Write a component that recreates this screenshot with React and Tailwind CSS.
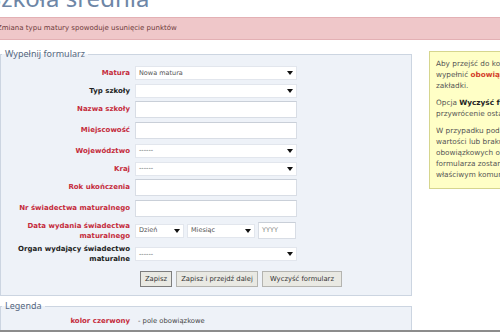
import React from 'react';

const Arrow = () => (
  <svg width="6" height="4" viewBox="0 0 6 4" className="shrink-0">
    <path d="M0 0 L6 0 L3 4 Z" fill="#111" />
  </svg>
);

const Select = ({ value = '', className = 'w-[162px]' }) => (
  <div className={`${className} h-[14px] bg-white border border-[#e2e6ed] flex items-center justify-between pl-[3px] pr-[3px]`}>
    <span className="text-[6.5px] text-[#555] leading-none">{value}</span>
    <Arrow />
  </div>
);

const Input = ({ placeholder = '', className = 'w-[162px]' }) => (
  <div className={`${className} h-[17px] bg-white border border-[#d8dde5] border-t-[#c9cfd8] flex items-center pl-[3px]`}>
    <span className="text-[6.5px] text-[#888] leading-none">{placeholder}</span>
  </div>
);

const Row = ({ label, required = true, h, children }) => (
  <div className={`flex items-center ${h}`}>
    <div className={`w-[129px] shrink-0 text-right font-bold text-[7px] leading-[10px] ${required ? 'text-[#c52c3c]' : 'text-[#222]'}`}>
      {label}
    </div>
    <div className="ml-[5px] flex items-center">{children}</div>
  </div>
);

const App = () => {
  return (
    <div className="w-[500px] h-[332px] overflow-hidden bg-white border-b-2 border-[#8c8c8c] font-['DejaVu_Sans',sans-serif]">
      {/* Page title, mostly scrolled off */}
      <div className="h-[17px] overflow-hidden">
        <div className="-mt-[14px] -ml-[12px] text-[24px] leading-[24px] text-[#6d86a6] font-['Noto_Sans',sans-serif]">Szkoła średnia</div>
      </div>

      {/* Warning bar */}
      <div className="h-[23px] bg-[#efc7c9] border-t border-b border-[#e3b0b4] flex items-center -ml-[3px]">
        <span className="text-[7px] text-[#6e3a3a] whitespace-nowrap">Zmiana typu matury spowoduje usunięcie punktów</span>
      </div>

      <div className="flex items-start">
        <div className="w-[412px] shrink-0">
          <fieldset className="mt-[8px] bg-[#eef2f8] border border-[#ccd5e1] pb-[3px]">
            <legend className="ml-[1px] px-[3px] text-[9px] leading-[12px] text-[#56687f] font-['Noto_Sans',sans-serif]">Wypełnij formularz</legend>
            <div className="pt-[4px]">
              <Row label="Matura" h="h-[18px]"><Select value="Nowa matura" /></Row>
              <Row label="Typ szkoły" required={false} h="h-[17px]"><Select /></Row>
              <Row label="Nazwa szkoły" h="h-[20px]"><Input /></Row>
              <Row label="Miejscowość" h="h-[22px]"><Input /></Row>
              <Row label="Województwo" h="h-[19px]"><Select value="------" /></Row>
              <Row label="Kraj" h="h-[17px]"><Select value="------" /></Row>
              <Row label="Rok ukończenia" h="h-[20px]"><Input /></Row>
              <Row label="Nr świadectwa maturalnego" h="h-[22px]"><Input /></Row>
              <Row label={<>Data wydania świadectwa<br />maturalnego</>} h="h-[23px]">
                <div className="flex items-center gap-[3px]">
                  <Select value="Dzień" className="w-[49px]" />
                  <Select value="Miesiąc" className="w-[68px]" />
                  <Input placeholder="YYYY" className="w-[38px]" />
                </div>
              </Row>
              <Row label={<>Organ wydający świadectwo<br />maturalne</>} required={false} h="h-[24px]">
                <Select value="------" />
              </Row>
              <div className="h-[26px] flex items-center pl-[139px] gap-[4px]">
                <button className="h-[16px] w-[32px] bg-[#e9e9e3] border border-[#7d7d7d] text-[6.8px] text-[#333]">Zapisz</button>
                <button className="h-[16px] w-[82px] bg-[#e9e9e3] border border-[#b4b4b0] text-[6.8px] text-[#333]">Zapisz i przejdź dalej</button>
                <button className="h-[16px] w-[80px] bg-[#e9e9e3] border border-[#b4b4b0] text-[6.8px] text-[#333]">Wyczyść formularz</button>
              </div>
            </div>
          </fieldset>

          <fieldset className="mt-[4px] bg-[#eef2f8] border border-[#ccd5e1] h-[40px]">
            <legend className="ml-[1px] px-[3px] text-[9px] leading-[12px] text-[#56687f] font-['Noto_Sans',sans-serif]">Legenda</legend>
            <div className="pt-[2px] h-[16px] flex items-center">
              <span className="w-[129px] text-right font-bold text-[7px] text-[#c52c3c]">kolor czerwony</span>
              <span className="ml-[8px] text-[6.8px] text-[#444]">- pole obowiązkowe</span>
            </div>
          </fieldset>
        </div>

        {/* Help box */}
        <div className="ml-[17px] mt-[11px] w-[200px] h-[138px] shrink-0 bg-[#ffffc6] border border-[#d6d68e] pl-[6px] pt-[6px] text-[7.3px] leading-[11px] text-[#555] whitespace-nowrap">
          <p>Aby przejść do kolejnej zakładki należy<br />wypełnić <b className="text-[#d4402a]">obowiązkowe pola</b> na bieżącej<br />zakładki.</p>
          <p className="mt-[6px]">Opcja <b className="text-[#222]">Wyczyść formularz</b> powoduje<br />przywrócenie ostatnio zapisanych danych.</p>
          <p className="mt-[6px]">W przypadku podania nieprawidłowej<br />wartości lub braku wypełnienia pól<br />obowiązkowych o błędach w wypełnieniu<br />formularza zostaniesz poinformowany<br />właściwym komunikatem.</p>
        </div>
      </div>
    </div>
  );
};

export default App;
